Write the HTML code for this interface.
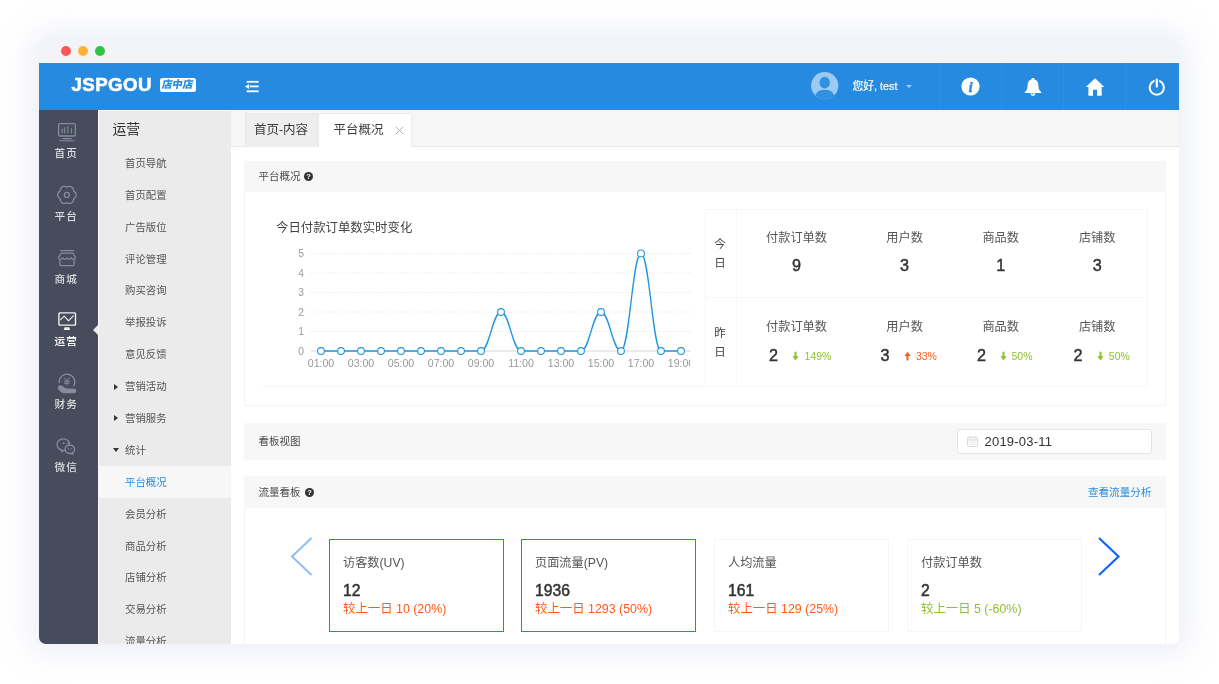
<!DOCTYPE html>
<html lang="zh-CN">
<head>
<meta charset="utf-8">
<title>JSPGOU 店中店 - 平台概况</title>
<style>
*{box-sizing:border-box;margin:0;padding:0}
html,body{width:1219px;height:684px;overflow:hidden;background:#fff}
body{font-family:"Liberation Sans","Noto Sans CJK SC",sans-serif;color:#333;position:relative}
.abs{position:absolute}
#win{will-change:transform;position:absolute;left:39px;top:39px;width:1140px;height:605px;border-radius:7px;background:#f3f4f9;
 box-shadow:0 1px 30px 9px rgba(196,202,230,.31);overflow:hidden}
.dot{position:absolute;top:7px;width:10px;height:10px;border-radius:50%}
#hdr{position:absolute;left:0;top:24px;width:1140px;height:47px;background:#268be0}
#logo{position:absolute;left:32.6px;top:9.7px;font-weight:bold;font-size:18.7px;line-height:24px;color:#fff;letter-spacing:.38px;-webkit-text-stroke:.55px #fff}
#badge{position:absolute;left:121px;top:15px;width:35.5px;height:13.6px;border-radius:2.5px;background:#fff;color:#268be0;font-size:10.4px;line-height:13.4px;text-align:center;font-weight:900;letter-spacing:0}
#badge span{display:inline-block;transform:skewX(-9deg)}
.hsep{position:absolute;top:0;width:1px;height:47px;background:rgba(255,255,255,.045)}
#nav{position:absolute;left:0;top:71px;width:58.5px;height:534px;background:#464c5b}
.nl{position:absolute;left:0;width:53.5px;text-align:center;font-size:10.6px;font-weight:500;line-height:14px;color:#dcdee3;letter-spacing:1.2px;text-indent:1.2px}
.ni{position:absolute;left:19px;width:19px;height:19px}
#sub{position:absolute;left:58.5px;top:71px;width:133px;height:534px;background:#ebebeb;box-shadow:inset 1px 1px 0 rgba(255,255,255,.75)}
#sub .t{position:absolute;left:15px;top:10.8px;font-size:13.8px;line-height:18px;color:#333}
.si{position:absolute;left:27.5px;font-size:10.4px;line-height:14px;color:#555}
.tri{position:absolute;left:15px;font-size:7px;line-height:14px;color:#333}
#main{position:absolute;left:191.5px;top:71px;width:948.5px;height:534px;background:#fff}
#tabs{position:absolute;left:0;top:0;width:948.5px;height:36.5px;background:#f6f6f6;border-bottom:1px solid #eaeaea}
.tab{position:absolute;top:3.3px;height:33.7px;font-size:12.5px;line-height:32px;color:#3c3c3c}
.ph{position:absolute;left:13.5px;width:922px;background:#f7f7f7;font-size:10.5px;color:#4a4a4a}
.pb{position:absolute;left:13.5px;width:922px;background:#fff;border:1px solid #f4f4f4;border-top:none}
.lbl{position:absolute;font-size:12.2px;line-height:16px;color:#555;text-align:center;width:96px}
.num{position:absolute;font-size:16.2px;line-height:20px;color:#333;font-weight:normal;-webkit-text-stroke:.45px #333;text-align:center}
.pct{position:absolute;font-size:10.5px;line-height:14px;margin-top:.8px}
.g{color:#8fc02f}.o{color:#ff5a1a}
.card{position:absolute;top:428.5px;width:175px;height:93.5px;background:#fff;border:1px solid #f6f6f6}
.card.on{border:1px solid #2a7fe2}
.card .a{position:absolute;left:13px;top:15px;font-size:12.2px;line-height:16px;color:#555}
.card .b{position:absolute;left:13px;top:41px;font-size:15.7px;line-height:20px;color:#333;font-weight:normal;-webkit-text-stroke:.5px #333}
.card .c{position:absolute;left:13px;top:61.6px;font-size:12.4px;line-height:16px}
</style>
</head>
<body>
<div id="win">
  <div class="dot" style="left:22px;background:#fc5753"></div>
  <div class="dot" style="left:39px;background:#fdb338"></div>
  <div class="dot" style="left:56px;background:#33c048"></div>

  <div id="hdr">
    <div id="logo">JSPGOU</div>
    <div id="badge"><span>店中店</span></div>
    <svg class="abs" style="left:206px;top:17px" width="15" height="14" viewBox="0 0 15 14"><g fill="#fff"><rect x="1.700" y=".9" width="12" height="1.800"/><rect x="4.900" y="5.500" width="8.800" height="1.800"/><rect x="1.700" y="10.400" width="12" height="1.800"/><path d="M.1 6.450 L4.100 4 L4.100 8.900Z"/></g></svg>
    <!-- avatar -->
    <svg class="abs" style="left:772px;top:9px" width="28" height="28" viewBox="0 0 28 28"><defs><clipPath id="cp"><circle cx="13.7" cy="13.7" r="13.6"/></clipPath></defs><circle cx="13.7" cy="13.7" r="13.6" fill="#9ccaf3"/><g clip-path="url(#cp)"><path d="M3.600 28 C3.600 20 8.500 17.800 13.700 17.800 C18.900 17.800 23.800 20 23.800 28Z" fill="#3190e2"/><ellipse cx="13.700" cy="10.600" rx="5.900" ry="6.500" fill="#3190e2" stroke="#9ccaf3" stroke-width="1.300"/></g></svg>
    <div class="abs" style="left:813.5px;top:16.3px;font-size:10.8px;line-height:14px;color:#fff;-webkit-text-stroke:.2px #fff">您好, test</div>
    <div class="abs" style="left:866.8px;top:21.5px;width:0;height:0;border-left:3.4px solid transparent;border-right:3.4px solid transparent;border-top:3.8px solid #a9d1f5"></div>
    <div class="hsep" style="left:900px"></div>
    <div class="hsep" style="left:962px"></div>
    <div class="hsep" style="left:1024px"></div>
    <div class="hsep" style="left:1086px"></div>
    <!-- info -->
    <svg class="abs" style="left:922px;top:14.4px" width="19" height="19" viewBox="0 0 19 19"><circle cx="9.500" cy="9.500" r="9.100" fill="#fff"/><text x="9.600" y="15" text-anchor="middle" font-family="Liberation Serif,serif" font-weight="bold" font-style="italic" font-size="15.500" fill="#268be0" stroke="#268be0" stroke-width=".35">i</text></svg>
    <!-- bell -->
    <svg class="abs" style="left:985px;top:14px" width="18" height="20" viewBox="0 0 18 20"><path fill="#fff" d="M9 1.100 C9.900 1.100 10.500 1.700 10.600 2.500 C13.200 3.200 14.400 5.400 14.400 8.200 C14.400 11.600 15.100 13.200 17.200 14.900 L17.200 16 L.8 16 L.8 14.900 C2.900 13.200 3.600 11.600 3.600 8.200 C3.600 5.400 4.800 3.200 7.400 2.500 C7.500 1.700 8.100 1.100 9 1.100Z"/><path d="M6.500 16.600 C6.700 18.100 7.700 19 9 19 C10.300 19 11.300 18.100 11.500 16.600Z" fill="#fff"/><path d="M8.300 16.900 C8.400 17.500 8.700 17.700 9.200 17.700" fill="none" stroke="#268be0" stroke-width=".7"/></svg>
    <!-- home -->
    <svg class="abs" style="left:1046px;top:14px" width="20" height="20" viewBox="0 0 20 20"><path fill="#fff" d="M10.050 1.200 L.8 9.900 L3.400 9.900 L3.400 18.700 L8 18.700 L8 12.700 L12.100 12.700 L12.100 18.700 L16.700 18.700 L16.700 9.900 L19.300 9.900Z"/></svg>
    <!-- power -->
    <svg class="abs" style="left:1108px;top:14px" width="20" height="21" viewBox="0 0 20 21"><circle cx="9.800" cy="10.600" r="7.100" fill="none" stroke="#fff" stroke-width="2"/><path d="M9.800 2v7.400" stroke="#268be0" stroke-width="4.600"/><path d="M9.800 2.600v7" stroke="#fff" stroke-width="2.100" stroke-linecap="round"/></svg>
  </div>

  <div id="nav">
    <svg class="abs" style="left:-39px;top:-110px" width="140" height="684" viewBox="0 0 140 684" fill="none" stroke-linecap="round" stroke-linejoin="round">
<g stroke="#878c9d" stroke-width="1.3"><rect x="58.6" y="123.6" width="16.8" height="12.4" rx="1.6"/><path d="M62.2 133.2v-4.5M64.7 133.2v-6M67.9 133.2v-7M71.5 133.2v-5" stroke-width="1.1" stroke-linecap="butt"/><path d="M62.8 138.6h8.4" stroke-width="1.1"/><path d="M59.8 140.7h14.4" stroke-width="1.1"/></g>
<g stroke="#878c9d" stroke-width="1.3"><path d="M76.10 194.90 L76.05 195.54 L75.89 196.16 L75.64 196.76 L75.31 197.31 L74.89 197.81 L74.41 198.24 L73.87 198.61 L73.60 199.08 L73.55 199.73 L73.41 200.37 L73.19 200.97 L72.88 201.54 L72.49 202.06 L72.03 202.50 L71.50 202.87 L70.92 203.14 L70.30 203.32 L69.66 203.40 L69.02 203.39 L68.38 203.27 L67.76 203.08 L67.18 202.79 L66.62 202.79 L66.04 203.08 L65.42 203.27 L64.78 203.39 L64.14 203.40 L63.50 203.32 L62.88 203.14 L62.30 202.87 L61.77 202.50 L61.31 202.06 L60.92 201.54 L60.61 200.97 L60.39 200.37 L60.25 199.73 L60.20 199.08 L59.93 198.61 L59.39 198.24 L58.91 197.81 L58.49 197.31 L58.16 196.76 L57.91 196.16 L57.75 195.54 L57.70 194.90 L57.75 194.26 L57.91 193.64 L58.16 193.04 L58.49 192.49 L58.91 191.99 L59.39 191.56 L59.93 191.19 L60.20 190.72 L60.25 190.07 L60.39 189.43 L60.61 188.83 L60.92 188.26 L61.31 187.74 L61.77 187.30 L62.30 186.93 L62.88 186.66 L63.50 186.48 L64.14 186.40 L64.78 186.41 L65.42 186.53 L66.04 186.72 L66.62 187.01 L67.18 187.01 L67.76 186.72 L68.38 186.53 L69.02 186.41 L69.66 186.40 L70.30 186.48 L70.92 186.66 L71.50 186.93 L72.03 187.30 L72.49 187.74 L72.88 188.26 L73.19 188.83 L73.41 189.43 L73.55 190.07 L73.60 190.72 L73.87 191.19 L74.41 191.56 L74.89 191.99 L75.31 192.49 L75.64 193.04 L75.89 193.64 L76.05 194.26Z"/><circle cx="66.9" cy="194.9" r="2.5"/></g>
<g stroke="#878c9d" stroke-width="1.25"><path d="M60.6 250.6h12.8"/><path d="M61 253.2h12l2.6 4.6q-1.1 1.5-2.15 1.5t-2.15-1.5q-1.1 1.5-2.15 1.5t-2.15-1.5q-1.1 1.5-2.15 1.5t-2.15-1.5q-1.1 1.5-2.15 1.5t-2.15-1.5z"/><path d="M59.9 260.2v4.2q0 1.1 1.1 1.1h12q1.1 0 1.1-1.1v-4.2"/></g>
<g stroke="#f2f2f2" stroke-width="1.4"><rect x="58.9" y="312.9" width="16.6" height="12.2" rx=".8"/><path d="M60.6 319.6l3.6-3.4 4.3 4.6 4.8-5" stroke-width="1.1"/></g><path d="M64.6 327.3h4.6l.9 2.6h-6.4z" fill="#f2f2f2"/>
<g stroke="#878c9d" stroke-width="1.2"><path d="M59.2 382.6a7.8 7.8 0 1 1 14.6 3.2"/><path d="M64.6 378.2l2.3 2.6 2.3-2.6M64.3 381.2h5.2M64.3 383.2h5.2M66.9 381v4.2" stroke-width="1"/></g><path d="M58.100 386.500C58.700 385.100 60.600 384.900 61.900 385.800L66.300 388.500 74.600 388.800C75.900 388.900 76.400 389.700 76.200 390.800L75.800 392.300C75.600 393 75.100 393.300 74.300 393.300L65 393.300C63 393.300 61.500 392.700 60.300 391.500L58.500 389.500C57.700 388.600 57.600 387.400 58.100 386.500Z" fill="#878c9d"/>
<g stroke="#878c9d" stroke-width="1.3"><path d="M69.600 445.100a6.300 5.700 0 1 0 -7.200 5.100l-.7 1.600 2.300-1.300q.900.150 1.500.1"/><path d="M65.100 449.300a4.700 4.200 0 1 1 6.900 3.700l.9 1.300-2.100-.9a4.700 4.200 0 0 1 -5.700-4.100z"/></g><g fill="#878c9d"><circle cx="63.700" cy="443.200" r=".9"/><circle cx="68.100" cy="443.200" r=".9"/><circle cx="68.400" cy="448.700" r=".65"/><circle cx="71.100" cy="448.700" r=".65"/></g>
</svg>
    <div class="nl" style="top:36px">首页</div>
    <div class="nl" style="top:98.5px">平台</div>
    <div class="nl" style="top:161.5px">商城</div>
    <div class="nl" style="top:224px;color:#fff">运营</div>
    <div class="nl" style="top:287px">财务</div>
    <div class="nl" style="top:350px">微信</div>
    <div class="abs" style="left:53.5px;top:215px;width:0;height:0;border-top:5px solid transparent;border-bottom:5px solid transparent;border-right:5px solid #ebebeb"></div>
  </div>

  <div id="sub">
    <div class="t">运营</div>
    <div class="abs" style="left:0;top:356px;width:133px;height:32px;background:#f7f7f7"></div>
    <div class="si" style="top:46.8px">首页导航</div>
    <div class="si" style="top:78.7px">首页配置</div>
    <div class="si" style="top:110.6px">广告版位</div>
    <div class="si" style="top:142.5px">评论管理</div>
    <div class="si" style="top:174.4px">购买咨询</div>
    <div class="si" style="top:206.2px">举报投诉</div>
    <div class="si" style="top:238.1px">意见反馈</div>
    <div class="abs" style="left:16.3px;top:273.5px;width:0;height:0;border-top:3px solid transparent;border-bottom:3px solid transparent;border-left:4.8px solid #333"></div>
    <div class="si" style="top:270.0px">营销活动</div>
    <div class="abs" style="left:16.3px;top:305.4px;width:0;height:0;border-top:3px solid transparent;border-bottom:3px solid transparent;border-left:4.8px solid #333"></div>
    <div class="si" style="top:301.9px">营销服务</div>
    <div class="abs" style="left:15.4px;top:338.4px;width:0;height:0;border-left:3.1px solid transparent;border-right:3.1px solid transparent;border-top:4.3px solid #333"></div>
    <div class="si" style="top:333.8px">统计</div>
    <div class="si" style="top:365.7px;color:#268be0">平台概况</div>
    <div class="si" style="top:397.6px">会员分析</div>
    <div class="si" style="top:429.5px">商品分析</div>
    <div class="si" style="top:461.4px">店铺分析</div>
    <div class="si" style="top:493.3px">交易分析</div>
    <div class="si" style="top:525.2px">流量分析</div>
  </div>

  <div id="main">
    <div id="tabs">
      <div class="tab" style="left:14px;width:73px;background:#eeeeee;border:1px solid #e9e9e9;border-bottom:none;text-align:center">首页-内容</div>
      <div class="tab" style="left:87.5px;width:93.5px;background:#fff;border:1px solid #ececec;border-bottom:none;padding-left:14.5px">平台概况<svg width="9" height="9" viewBox="0 0 9 9" style="margin-left:11px;vertical-align:-0.5px"><path d="M.8 .8L8.200 8.200M8.200 .8L.8 8.200" stroke="#aaa" stroke-width=".9"/></svg></div>
    </div>

    <!-- panel 1 -->
    <div class="ph" style="top:51px;height:31px;line-height:31px;padding-left:14.5px">平台概况 <svg width="9" height="9" viewBox="0 0 9 9" style="vertical-align:-1px;margin-left:1px"><circle cx="4.5" cy="4.5" r="4.5" fill="#333"/><text x="4.5" y="7.4" text-anchor="middle" font-size="7.5" font-weight="bold" fill="#fff" font-family="Liberation Sans,sans-serif">?</text></svg></div>
    <div class="pb" style="top:82px;height:214px"></div>
    <svg class="abs" style="left:-230.5px;top:-110px" width="1219" height="684" viewBox="0 0 1219 684" font-family="Liberation Sans,Noto Sans CJK SC,sans-serif">
<defs><clipPath id="cc"><rect x="300" y="240" width="390" height="135"/></clipPath></defs>
<text x="276" y="232.3" font-size="12.4" fill="#444">今日付款订单数实时变化</text>
<line x1="311" x2="691" y1="331.5" y2="331.5" stroke="#e8e8e8" stroke-width="1" stroke-dasharray="1 1.4"/>
<line x1="311" x2="691" y1="312.0" y2="312.0" stroke="#e8e8e8" stroke-width="1" stroke-dasharray="1 1.4"/>
<line x1="311" x2="691" y1="292.4" y2="292.4" stroke="#e8e8e8" stroke-width="1" stroke-dasharray="1 1.4"/>
<line x1="311" x2="691" y1="272.9" y2="272.9" stroke="#e8e8e8" stroke-width="1" stroke-dasharray="1 1.4"/>
<line x1="311" x2="691" y1="253.4" y2="253.4" stroke="#e8e8e8" stroke-width="1" stroke-dasharray="1 1.4"/>
<line x1="311" x2="691" y1="351.0" y2="351.0" stroke="#d8d8d8" stroke-width="1"/>
<text x="301" y="354.6" font-size="10.3" fill="#999" text-anchor="middle">0</text>
<text x="301" y="335.1" font-size="10.3" fill="#999" text-anchor="middle">1</text>
<text x="301" y="315.6" font-size="10.3" fill="#999" text-anchor="middle">2</text>
<text x="301" y="296.0" font-size="10.3" fill="#999" text-anchor="middle">3</text>
<text x="301" y="276.5" font-size="10.3" fill="#999" text-anchor="middle">4</text>
<text x="301" y="257.0" font-size="10.3" fill="#999" text-anchor="middle">5</text>
<g clip-path="url(#cc)">
<text x="321" y="366.8" font-size="10.6" fill="#999" text-anchor="middle">01:00</text>
<text x="361" y="366.8" font-size="10.6" fill="#999" text-anchor="middle">03:00</text>
<text x="401" y="366.8" font-size="10.6" fill="#999" text-anchor="middle">05:00</text>
<text x="441" y="366.8" font-size="10.6" fill="#999" text-anchor="middle">07:00</text>
<text x="481" y="366.8" font-size="10.6" fill="#999" text-anchor="middle">09:00</text>
<text x="521" y="366.8" font-size="10.6" fill="#999" text-anchor="middle">11:00</text>
<text x="561" y="366.8" font-size="10.6" fill="#999" text-anchor="middle">13:00</text>
<text x="601" y="366.8" font-size="10.6" fill="#999" text-anchor="middle">15:00</text>
<text x="641" y="366.8" font-size="10.6" fill="#999" text-anchor="middle">17:00</text>
<text x="681" y="366.8" font-size="10.6" fill="#999" text-anchor="middle">19:00</text>
</g>
<path d="M321 351.0 C329.4 351.0 332.6 351.0 341 351.0 C349.4 351.0 352.6 351.0 361 351.0 C369.4 351.0 372.6 351.0 381 351.0 C389.4 351.0 392.6 351.0 401 351.0 C409.4 351.0 412.6 351.0 421 351.0 C429.4 351.0 432.6 351.0 441 351.0 C449.4 351.0 452.6 351.0 461 351.0 C469.4 351.0 472.6 351.0 481 351.0 C489.4 351.0 492.6 312.0 501 312.0 C509.4 312.0 512.6 351.0 521 351.0 C529.4 351.0 532.6 351.0 541 351.0 C549.4 351.0 552.6 351.0 561 351.0 C569.4 351.0 572.6 351.0 581 351.0 C589.4 351.0 592.6 312.0 601 312.0 C609.4 312.0 612.6 351.0 621 351.0 C629.4 351.0 632.6 253.4 641 253.4 C649.4 253.4 652.6 351.0 661 351.0 C669.4 351.0 672.6 351.0 681 351.0" fill="none" stroke="#2397dc" stroke-width="1.35"/>
<circle cx="321" cy="351.0" r="3.4" fill="#fff" stroke="#2397dc" stroke-width="1.1"/>
<circle cx="341" cy="351.0" r="3.4" fill="#fff" stroke="#2397dc" stroke-width="1.1"/>
<circle cx="361" cy="351.0" r="3.4" fill="#fff" stroke="#2397dc" stroke-width="1.1"/>
<circle cx="381" cy="351.0" r="3.4" fill="#fff" stroke="#2397dc" stroke-width="1.1"/>
<circle cx="401" cy="351.0" r="3.4" fill="#fff" stroke="#2397dc" stroke-width="1.1"/>
<circle cx="421" cy="351.0" r="3.4" fill="#fff" stroke="#2397dc" stroke-width="1.1"/>
<circle cx="441" cy="351.0" r="3.4" fill="#fff" stroke="#2397dc" stroke-width="1.1"/>
<circle cx="461" cy="351.0" r="3.4" fill="#fff" stroke="#2397dc" stroke-width="1.1"/>
<circle cx="481" cy="351.0" r="3.4" fill="#fff" stroke="#2397dc" stroke-width="1.1"/>
<circle cx="501" cy="312.0" r="3.4" fill="#fff" stroke="#2397dc" stroke-width="1.1"/>
<circle cx="521" cy="351.0" r="3.4" fill="#fff" stroke="#2397dc" stroke-width="1.1"/>
<circle cx="541" cy="351.0" r="3.4" fill="#fff" stroke="#2397dc" stroke-width="1.1"/>
<circle cx="561" cy="351.0" r="3.4" fill="#fff" stroke="#2397dc" stroke-width="1.1"/>
<circle cx="581" cy="351.0" r="3.4" fill="#fff" stroke="#2397dc" stroke-width="1.1"/>
<circle cx="601" cy="312.0" r="3.4" fill="#fff" stroke="#2397dc" stroke-width="1.1"/>
<circle cx="621" cy="351.0" r="3.4" fill="#fff" stroke="#2397dc" stroke-width="1.1"/>
<circle cx="641" cy="253.4" r="3.4" fill="#fff" stroke="#2397dc" stroke-width="1.1"/>
<circle cx="661" cy="351.0" r="3.4" fill="#fff" stroke="#2397dc" stroke-width="1.1"/>
<circle cx="681" cy="351.0" r="3.4" fill="#fff" stroke="#2397dc" stroke-width="1.1"/>
<line x1="263" x2="705" y1="386.5" y2="386.5" stroke="#f4f4f4"/>
<g stroke="#f7f7f7" stroke-width="1" fill="none"><rect x="705.5" y="209.5" width="441.5" height="177"/><line x1="736.5" x2="736.5" y1="209.5" y2="386.5"/><line x1="705.5" x2="1147" y1="297.5" y2="297.5"/></g>
</svg>
    <div class="lbl" style="left:518.0px;top:119.6px">付款订单数</div>
<div class="num" style="left:518.0px;top:144.8px;width:96px">9</div>
<div class="lbl" style="left:518.0px;top:209.4px">付款订单数</div>
<div class="lbl" style="left:626.1px;top:119.6px">用户数</div>
<div class="num" style="left:626.1px;top:144.8px;width:96px">3</div>
<div class="lbl" style="left:626.1px;top:209.4px">用户数</div>
<div class="lbl" style="left:722.2px;top:119.6px">商品数</div>
<div class="num" style="left:722.2px;top:144.8px;width:96px">1</div>
<div class="lbl" style="left:722.2px;top:209.4px">商品数</div>
<div class="lbl" style="left:818.7px;top:119.6px">店铺数</div>
<div class="num" style="left:818.7px;top:144.8px;width:96px">3</div>
<div class="lbl" style="left:818.7px;top:209.4px">店铺数</div>
<div class="num" style="left:533.1px;top:234.8px;width:20px">2</div>
<svg class="abs" style="left:561.7px;top:241px" width="7" height="10" viewBox="0 0 7 9.5" fill="#8fc02f"><path d="M2.500 .6h2v4.400h2.100L3.500 9.200 .4 5h2.100z"/></svg>
<div class="pct g" style="left:574.0px;top:238.5px">149%</div>
<div class="num" style="left:644.5px;top:234.8px;width:20px">3</div>
<svg class="abs" style="left:673.1px;top:241px" width="7" height="10" viewBox="0 0 7 9.5" fill="#ff5a1a"><path d="M2.500 9.200h2V4.800h2.100L3.500 .6 .4 4.800h2.100z"/></svg>
<div class="pct o" style="left:685.4px;top:238.5px">33%</div>
<div class="num" style="left:740.9px;top:234.8px;width:20px">2</div>
<svg class="abs" style="left:769.5px;top:241px" width="7" height="10" viewBox="0 0 7 9.5" fill="#8fc02f"><path d="M2.500 .6h2v4.400h2.100L3.500 9.200 .4 5h2.100z"/></svg>
<div class="pct g" style="left:781.0px;top:238.5px">50%</div>
<div class="num" style="left:837.4px;top:234.8px;width:20px">2</div>
<svg class="abs" style="left:866.0px;top:241px" width="7" height="10" viewBox="0 0 7 9.5" fill="#8fc02f"><path d="M2.500 .6h2v4.400h2.100L3.500 9.200 .4 5h2.100z"/></svg>
<div class="pct g" style="left:878.3px;top:238.5px">50%</div>
<div class="abs" style="left:479.5px;width:20px;text-align:center;top:126.2px;font-size:11.5px;line-height:16px;color:#444">今</div>
<div class="abs" style="left:479.5px;width:20px;text-align:center;top:145.1px;font-size:11.5px;line-height:16px;color:#444">日</div>
<div class="abs" style="left:479.5px;width:20px;text-align:center;top:215.4px;font-size:11.5px;line-height:16px;color:#444">昨</div>
<div class="abs" style="left:479.5px;width:20px;text-align:center;top:233.5px;font-size:11.5px;line-height:16px;color:#444">日</div>

    <!-- panel 2 -->
    <div class="ph" style="top:313px;height:36.5px;line-height:36.5px;padding-left:14.5px">看板视图</div>
    <div class="abs" style="left:726.3px;top:318.8px;width:195.3px;height:24.8px;background:#fff;border:1px solid #e4e4e4;border-radius:3px"></div>
    <div class="abs" style="left:754px;top:323px;font-size:13px;line-height:17px;color:#333;letter-spacing:.22px">2019-03-11</div>
    <svg class="abs" style="left:736px;top:325.500px" width="11" height="11" viewBox="0 0 11 11"><rect x=".5" y="1.300" width="10" height="9.200" rx="1.200" fill="#fafafa" stroke="#d4d4d8" stroke-width=".8"/><path d="M.5 3.900h10" stroke="#d4d4d8" stroke-width=".8"/><path d="M3 .3v2M8 .3v2" stroke="#d4d4d8" stroke-width=".9"/><path d="M2.500 6h6M2.500 8h6" stroke="#e2e2e6" stroke-width=".9" stroke-dasharray="1.400 .9"/></svg>

    <!-- panel 3 -->
    <div class="ph" style="top:366px;height:31.7px;line-height:32.5px;padding-left:14.5px">流量看板 <svg width="9" height="9" viewBox="0 0 9 9" style="vertical-align:-1px;margin-left:1.5px"><circle cx="4.5" cy="4.5" r="4.5" fill="#333"/><text x="4.5" y="7.4" text-anchor="middle" font-size="7.5" font-weight="bold" fill="#fff" font-family="Liberation Sans,sans-serif">?</text></svg></div>
    <div class="abs" style="left:857px;top:366px;width:64px;text-align:right;font-size:10.6px;line-height:32.5px;color:#268be0;white-space:nowrap">查看流量分析</div>
    <div class="pb" style="top:397.7px;height:141px"></div>
    <svg class="abs" style="left:59px;top:427px" width="24" height="40" viewBox="0 0 24 40"><path d="M21.5 1 L2 19.5 L21.5 38" fill="none" stroke="#8ebcf8" stroke-width="1.9"/></svg>
    <svg class="abs" style="left:866px;top:427px" width="24" height="40" viewBox="0 0 24 40"><path d="M2 1 L21.5 19.5 L2 38" fill="none" stroke="#1464fa" stroke-width="2.2"/></svg>
    <div class="card on" style="left:98.5px"><div class="a">访客数(UV)</div><div class="b">12</div><div class="c o">较上一日 10 (20%)</div></div>
    <div class="card on" style="left:290.5px"><div class="a">页面流量(PV)</div><div class="b">1936</div><div class="c o">较上一日 1293 (50%)</div></div>
    <div class="card" style="left:483.5px"><div class="a">人均流量</div><div class="b">161</div><div class="c o">较上一日 129 (25%)</div></div>
    <div class="card" style="left:676.5px"><div class="a">付款订单数</div><div class="b">2</div><div class="c g">较上一日 5 (-60%)</div></div>
  </div>
</div>
</body>
</html>
